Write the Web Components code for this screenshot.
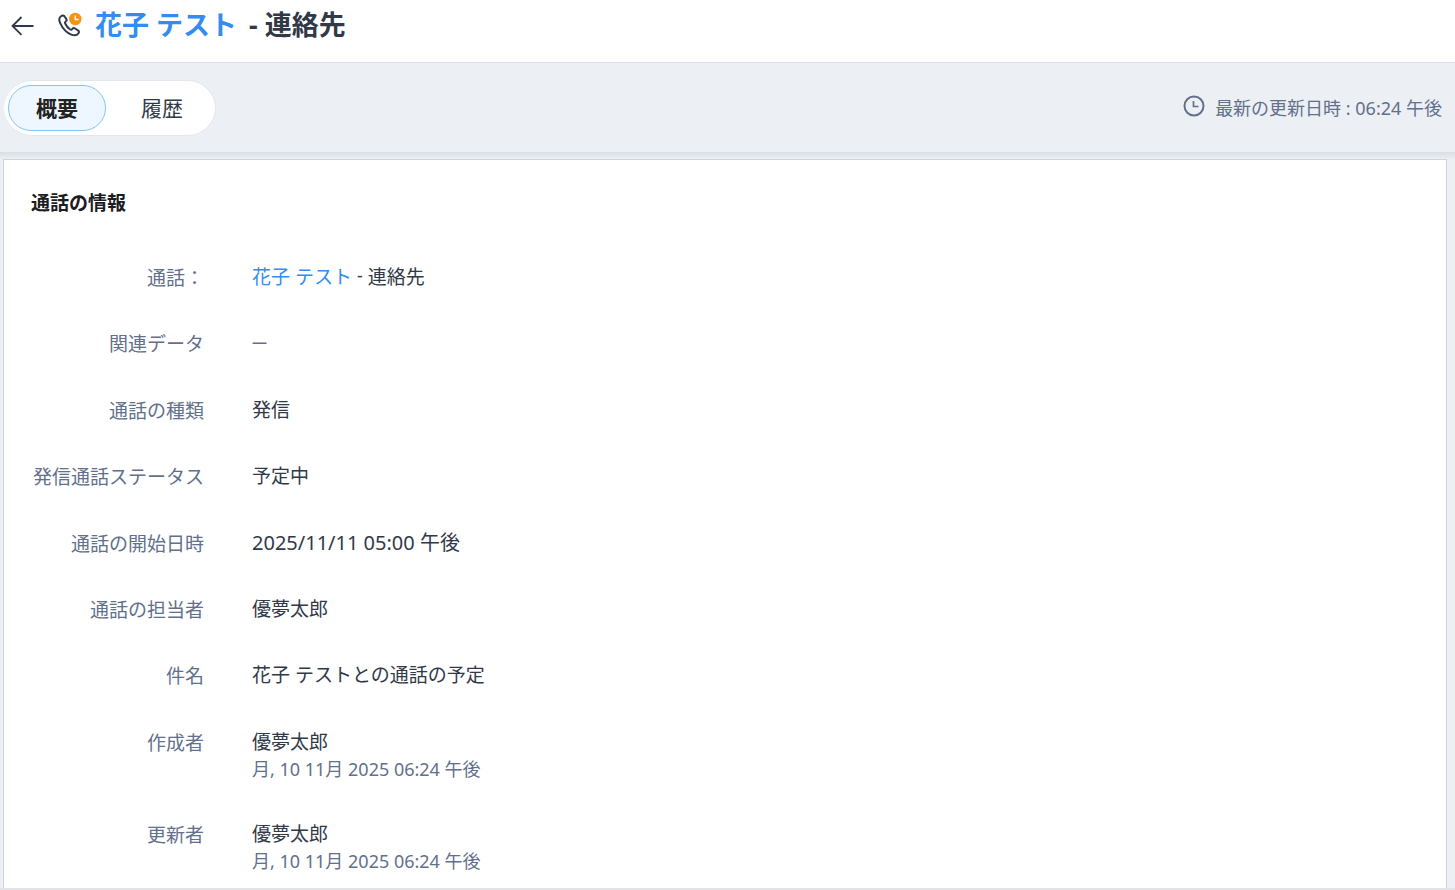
<!DOCTYPE html>
<html lang="ja">
<head>
<meta charset="utf-8">
<meta name="viewport" content="width=device-width, initial-scale=1">
<title>花子 テスト - 連絡先</title>
<style>
  html, body { margin: 0; }
  body {
    font-family: "Noto Sans", "Noto Sans CJK JP", sans-serif;
    font-size: 19px;
    line-height: 28px;
    color: #313949;
    background: #eceff4;
  }
  time { font-size: 20px; }
</style>
</head>
<body>
<call-page>
  <page-header slot="header">
    <a href="#contact">花子 テスト</a>
    <span slot="kind">- 連絡先</span>
  </page-header>
  <view-bar slot="bar">
    <view-tab selected>概要</view-tab>
    <view-tab>履歴</view-tab>
    <span slot="status">最新の更新日時 : 06:24 午後</span>
  </view-bar>
  <info-card>
    <span slot="title">通話の情報</span>
    <info-field label="通話："><entity-link>花子 テスト<span slot="kind">連絡先</span></entity-link></info-field>
    <info-field label="関連データ"><empty-value></empty-value></info-field>
    <info-field label="通話の種類">発信</info-field>
    <info-field label="発信通話ステータス">予定中</info-field>
    <info-field label="通話の開始日時"><time datetime="2025-11-11T17:00">2025/11/11 05:00 午後</time></info-field>
    <info-field label="通話の担当者">優夢太郎</info-field>
    <info-field label="件名">花子 テストとの通話の予定</info-field>
    <info-field label="作成者">優夢太郎<span slot="note">月, 10 11月 2025 06:24 午後</span></info-field>
    <info-field label="更新者">優夢太郎<span slot="note">月, 10 11月 2025 06:24 午後</span></info-field>
  </info-card>
</call-page>

<script>
const define = (name, html, setup) => {
  const template = document.createElement('template');
  template.innerHTML = html;
  customElements.define(name, class extends HTMLElement {
    constructor() {
      super();
      this.attachShadow({ mode: 'open' }).append(template.content.cloneNode(true));
    }
    connectedCallback() { if (setup) setup(this, this.shadowRoot); }
  });
};

define('call-page', `
  <style>
    :host { display: flex; flex-direction: column; min-height: 100vh; box-sizing: border-box; border-bottom: 2px solid #e1e3e6; }
    main { flex: 1; display: flex; flex-direction: column; padding: 7px 8px 0 3px; background: linear-gradient(#d9dee4, #eceff3 7px, #eceff4 14px); }
  </style>
  <slot name="header"></slot>
  <slot name="bar"></slot>
  <main><slot></slot></main>`);

define('page-header', `
  <style>
    :host { display: block; background: #fff; border-bottom: 1px solid #d5e2ec; }
    header { display: flex; align-items: center; height: 50px; padding: 0 10px 12px; }
    button { display: flex; padding: 0; border: 0; background: none; color: #313949; cursor: pointer; }
    .phone { margin: 0 13px 0 22px; }
    h1 { margin: 0; font-size: 27px; line-height: 40px; font-weight: 700; white-space: nowrap; display: flex; gap: 12px; }
    ::slotted(a) { color: #338cf0; text-decoration: none; }
  </style>
  <header>
    <button type="button" aria-label="戻る">
      <svg width="25" height="24" viewBox="0 0 25 24" fill="none" stroke="currentColor" stroke-width="1.8"><path d="M23.5 13H2.5M11.5 4L2.5 13l9 8.800"/></svg>
    </button>
    <svg class="phone" width="25" height="26" viewBox="0 0 25 26" aria-hidden="true">
      <path d="M4 4.200C2 5.600 1.700 7.900 3.200 11.200c2.200 4.800 6.400 9.600 11.100 11.400 3.200 1.200 5.700.8 7.200-1.400.8-1.200.5-2.200-.6-2.900l-2.800-1.800c-1.100-.7-2.100-.5-2.800.5-.6.900-1.300 1-2.100.5-2.300-1.400-3.900-3.600-5-6-.4-.9-.2-1.500.5-2 1-.7 1.200-1.500.6-2.600L7.800 4.700C6.900 3.100 5.500 3 4 4.200Z" fill="none" stroke="#313949" stroke-width="2" stroke-linejoin="round"/>
      <circle cx="18.300" cy="7" r="6.200" fill="#f5930f"/>
      <path d="M18.200 3.500v4h3.400" fill="none" stroke="#fff" stroke-width="1.300"/>
    </svg>
    <h1><slot></slot><slot name="kind"></slot></h1>
  </header>`);

define('view-bar', `
  <style>
    :host { display: flex; align-items: center; justify-content: space-between; height: 89px; padding: 0 13px 0 4px; background: #eceff4; }
    nav { display: flex; gap: 7px; padding: 4px; border: 1px solid #e2e7ed; border-left-width: 0; border-radius: 28px; background: #fff; }
    .status { display: flex; align-items: center; gap: 10px; font-size: 18px; color: #62708c; }
    svg { margin-bottom: 4px; }
  </style>
  <nav aria-label="表示"><slot></slot></nav>
  <div class="status">
    <svg width="22" height="22" viewBox="0 0 22 22" fill="none" stroke="currentColor" aria-hidden="true"><circle cx="11" cy="11" r="9.500" stroke-width="2"/><path d="M10.500 6v5.500h5" stroke-width="1.700"/></svg>
    <slot name="status"></slot>
  </div>`);

define('view-tab', `
  <style>
    :host { display: block; }
    button { height: 46px; padding: 0 27px; border: 1px solid transparent; border-radius: 23px; background: none; font: inherit; font-size: 21px; color: #313949; cursor: pointer; }
    :host([selected]) button { border-color: #7fc6f2; background: #eef7ff; font-weight: 700; color: #222; }
  </style>
  <button type="button"><slot></slot></button>`,
  (host, root) => root.querySelector('button').setAttribute('aria-pressed', host.hasAttribute('selected')));

define('info-card', `
  <style>
    :host { flex: 1; display: flex; flex-direction: column; background: #fff; border: 1px solid #ccd5de; border-bottom: 0; padding: 29px 27px 14px; }
    h2 { margin: 0 0 46px; font-size: 19px; line-height: 28px; font-weight: 700; color: #1d1d1f; }
    .fields { flex: 1; display: flex; flex-direction: column; justify-content: space-between; gap: 38px; }
  </style>
  <h2><slot name="title"></slot></h2>
  <div class="fields"><slot></slot></div>`);

define('info-field', `
  <style>
    :host { display: block; }
    dl { display: grid; grid-template-columns: 173px 1fr; column-gap: 48px; margin: 0; }
    dt { padding-top: 1px; margin-bottom: -1px; text-align: right; white-space: nowrap; color: #62708c; }
    dd { margin: 0; }
    ::slotted([slot=note]) { display: block; font-size: 18px; line-height: 26px; color: #62708c; }
  </style>
  <dl><dt></dt><dd><slot></slot><slot name="note"></slot></dd></dl>`,
  (host, root) => { root.querySelector('dt').textContent = host.getAttribute('label'); });

define('entity-link', `
  <style>
    :host { display: inline-flex; gap: 5px; }
    a { color: #338cf0; text-decoration: none; }
    .dash { font-size: 18px; line-height: 24px; }
  </style>
  <a href="#contact"><slot></slot></a><span class="dash">-</span><slot name="kind"></slot>`);

define('empty-value', `
  <style>
    :host { display: block; color: #62708c; }
    span { display: block; font-size: 15px; line-height: 24px; font-weight: 700; }
  </style>
  <span>—</span>`);
</script>
</body>
</html>
